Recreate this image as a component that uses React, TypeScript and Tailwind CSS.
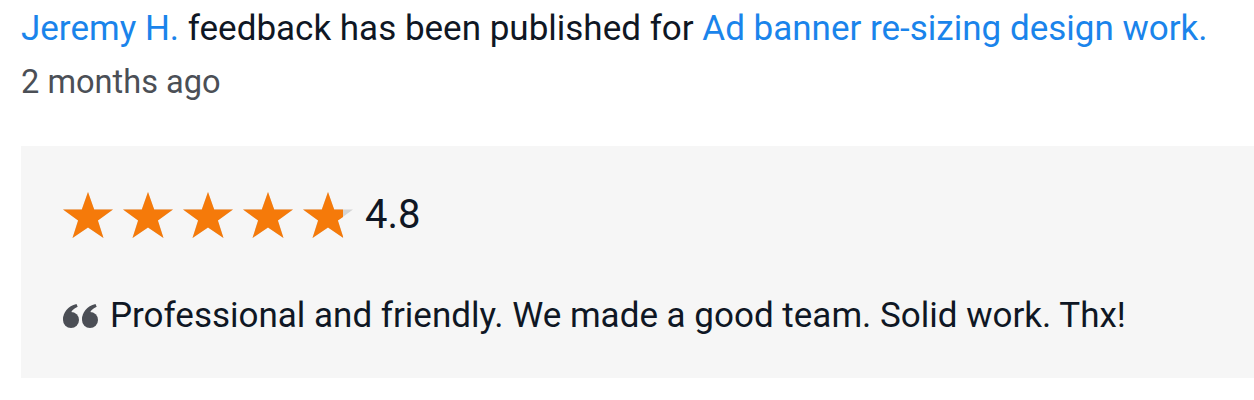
import React from 'react';

const STAR = '25,0 31.2,17.6 50,17.6 34.9,28.6 40.5,46 25,35.4 9.5,46 15.1,28.6 0,17.6 18.8,17.6';

function Star({ fill = 1, id }: { fill?: number; id: string }) {
  return (
    <svg width="50" height="46" viewBox="0 0 50 46" className="shrink-0">
      <defs>
        <clipPath id={id}>
          <rect x="0" y="0" width={50 * fill} height="46" />
        </clipPath>
      </defs>
      <polygon points={STAR} fill="#d4d4d4" />
      <polygon points={STAR} fill="#f57a0a" clipPath={`url(#${id})`} />
    </svg>
  );
}

function QuoteIcon() {
  return (
    <svg width="35" height="24" viewBox="0 0 35 24" className="shrink-0">
      <g fill="#4b4e55">
        <circle cx="8" cy="16" r="8" />
        <path d="M0 16C0 8.5 4.8 2 13.5 0l1.2 2.8C10.5 4.6 8.6 7 8.4 8.2Z" />
        <circle cx="27" cy="16" r="8" />
        <path d="M19 16C19 8.5 23.8 2 32.5 0l1.2 2.8c-4.2 1.8-6.1 4.2-6.3 5.4Z" />
      </g>
    </svg>
  );
}

export default function App() {
  const rating = 4.8;
  return (
    <div className="w-[1254px] h-[400px] bg-white overflow-hidden font-['Roboto',sans-serif] pl-[21px] pt-[9px]">
      <p className="text-[35px] leading-[40px] text-[#0f1724] whitespace-nowrap">
        <a className="text-[#1a84eb]">Jeremy H.</a> feedback has been published for{' '}
        <a className="text-[#1a84eb]">Ad banner re-sizing design work.</a>
      </p>
      <p className="text-[32.6px] leading-[40px] text-[#4b4f56] mt-[13px]">2 months ago</p>

      <div className="mt-[44px] bg-[#f6f6f6] h-[232px] pl-[42px] pt-[46px]">
        <div className="flex items-center gap-[10px]">
          {[0, 1, 2, 3, 4].map((i) => (
            <Star key={i} id={`star-${i}`} fill={Math.min(1, Math.max(0, rating - i))} />
          ))}
          <span className="ml-[2px] text-[40px] leading-[46px] text-[#0f1724]">{rating}</span>
        </div>
        <div className="flex items-center gap-[12px] mt-[58px]">
          <QuoteIcon />
          <span className="text-[35px] leading-[40px] text-[#0f1724] whitespace-nowrap">
            Professional and friendly. We made a good team. Solid work. Thx!
          </span>
        </div>
      </div>
    </div>
  );
}
